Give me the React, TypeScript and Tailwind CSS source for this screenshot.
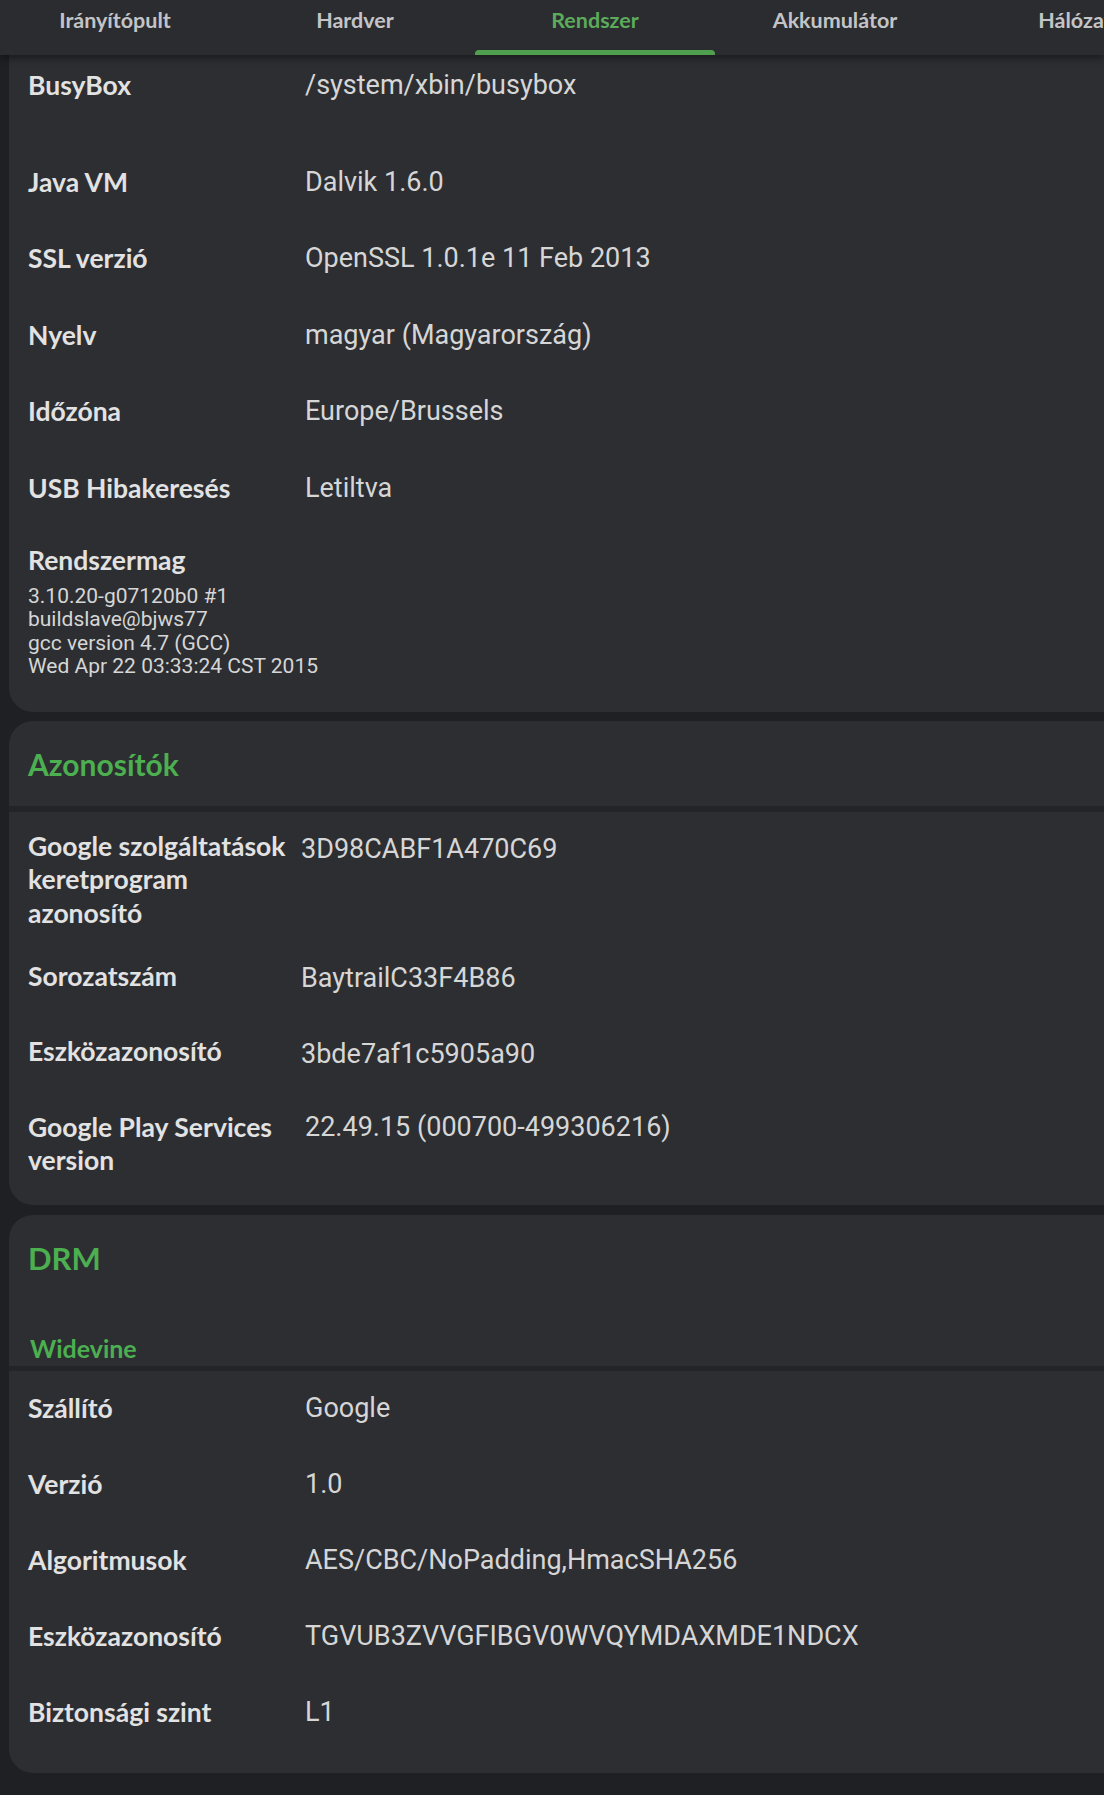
import React from 'react'

const TABS = ['Irányítópult', 'Hardver', 'Rendszer', 'Akkumulátor', 'Hálózat']
const ACTIVE = 'Rendszer'

const lato = { fontFamily: 'Lato, "Noto Sans", sans-serif' }
const roboto = { fontFamily: 'Roboto, "Noto Sans", sans-serif' }

function Row({
  label,
  value,
  className = 'h-[76.5px] items-center',
  labelWidth = 'w-[277px]',
  valueClass = '',
}: {
  label: React.ReactNode
  value: string
  className?: string
  labelWidth?: string
  valueClass?: string
}) {
  return (
    <div className={`flex pl-[19px] ${className}`}>
      <div className={`${labelWidth} shrink-0 text-[26.5px] leading-[33.5px] font-bold text-[#e2e2e2]`} style={lato}>
        {label}
      </div>
      <div className={`text-[27px] leading-[33.5px] text-[#d6d6d6] whitespace-nowrap ${valueClass}`} style={roboto}>
        {value}
      </div>
    </div>
  )
}

export default function App() {
  return (
    <div className="w-[1104px] min-h-[1795px] overflow-hidden bg-[#1f2023]">
      {/* Tabs */}
      <div className="relative z-10 h-[55px] bg-[#2b2c30] shadow-[0_3px_8px_rgba(0,0,0,0.45)]">
        <div className="flex ml-[-5px]">
          {TABS.map((t) => {
            const active = t === ACTIVE
            return (
              <div key={t} className="relative w-[240px] h-[55px] shrink-0 flex justify-center pt-[6px]">
                <span
                  className={`text-[21.5px] leading-[28px] font-bold whitespace-nowrap ${active ? 'text-[#5bab5b]' : 'text-[#c4c4c6]'}`}
                  style={lato}
                >
                  {t}
                </span>
                {active && (
                  <span className="absolute left-0 right-0 bottom-0 h-[5px] rounded-t-[4px] bg-[#4f9f4f]" />
                )}
              </div>
            )
          })}
        </div>
      </div>

      {/* Rendszer */}
      <div className="ml-[9px] w-[1130px] bg-[#2d2e32] rounded-b-[24px]">
        <Row label="BusyBox" value="/system/xbin/busybox" className="h-[89px] items-start pt-[14px]" />
        <Row label="Java VM" value="Dalvik 1.6.0" />
        <Row label="SSL verzió" value="OpenSSL 1.0.1e 11 Feb 2013" />
        <Row label="Nyelv" value="magyar (Magyarország)" />
        <Row label="Időzóna" value="Europe/Brussels" />
        <Row label="USB Hibakeresés" value="Letiltva" />
        <div className="pl-[19px] pt-[16px] pb-[33px]">
          <div className="text-[26.5px] leading-[34px] font-bold text-[#e2e2e2]" style={lato}>
            Rendszermag
          </div>
          <div className="mt-[8px] text-[21px] leading-[23.5px] text-[#d6d6d6]" style={roboto}>
            <div>3.10.20-g07120b0 #1</div>
            <div>buildslave@bjws77</div>
            <div>gcc version 4.7 (GCC)</div>
            <div>Wed Apr 22 03:33:24 CST 2015</div>
          </div>
        </div>
      </div>

      {/* Azonosítók */}
      <div className="ml-[9px] w-[1130px] mt-[9px] flex flex-col">
        <div className="h-[85px] rounded-t-[24px] bg-[#2d2e32] pl-[19px] pt-[23px]">
          <div className="text-[30px] leading-[40px] font-bold text-[#4caf50]" style={lato}>
            Azonosítók
          </div>
        </div>
        <div className="h-[6px] bg-[#232427]" />
        <div className="bg-[#2d2e32] rounded-b-[24px] pb-[27px]">
          <Row
            label={<>Google szolgáltatások keretprogram azonosító</>}
            value="3D98CABF1A470C69"
            className="h-[128px] items-start pt-[18px]"
            labelWidth="w-[273px] pr-[4px]"
            valueClass="pt-[3px]"
          />
          <Row label="Sorozatszám" value="BaytrailC33F4B86" className="h-[75px] items-center" labelWidth="w-[273px]" valueClass="pt-[4px]" />
          <Row label="Eszközazonosító" value="3bde7af1c5905a90" className="h-[75px] items-center" labelWidth="w-[273px]" valueClass="pt-[5px]" />
          <Row
            label={<>Google Play Services version</>}
            value="22.49.15 (000700-499306216)"
            className="items-start pt-[21px]"
            labelWidth="w-[277px] pr-[20px]"
          />
        </div>
      </div>

      {/* DRM */}
      <div className="ml-[9px] w-[1130px] mt-[10px] flex flex-col">
        <div className="h-[151px] rounded-t-[24px] bg-[#2d2e32] pl-[19px] pt-[23px]">
          <div className="text-[31px] leading-[40px] font-bold text-[#4caf50]" style={lato}>
            DRM
          </div>
          <div className="mt-[54px] ml-[2px] text-[25px] leading-[32px] font-bold text-[#4caf50]" style={lato}>
            Widevine
          </div>
        </div>
        <div className="h-[5px] bg-[#232427]" />
        <div className="bg-[#2d2e32] rounded-b-[24px] pb-[22px]">
          <Row label="Szállító" value="Google" className="h-[76px] items-center" />
          <Row label="Verzió" value="1.0" className="h-[76px] items-center" />
          <Row label="Algoritmusok" value="AES/CBC/NoPadding,HmacSHA256" className="h-[76px] items-center" />
          <Row label="Eszközazonosító" value="TGVUB3ZVVGFIBGV0WVQYMDAXMDE1NDCX" className="h-[76px] items-center" />
          <Row label="Biztonsági szint" value="L1" className="h-[76px] items-center" />
        </div>
      </div>
    </div>
  )
}
